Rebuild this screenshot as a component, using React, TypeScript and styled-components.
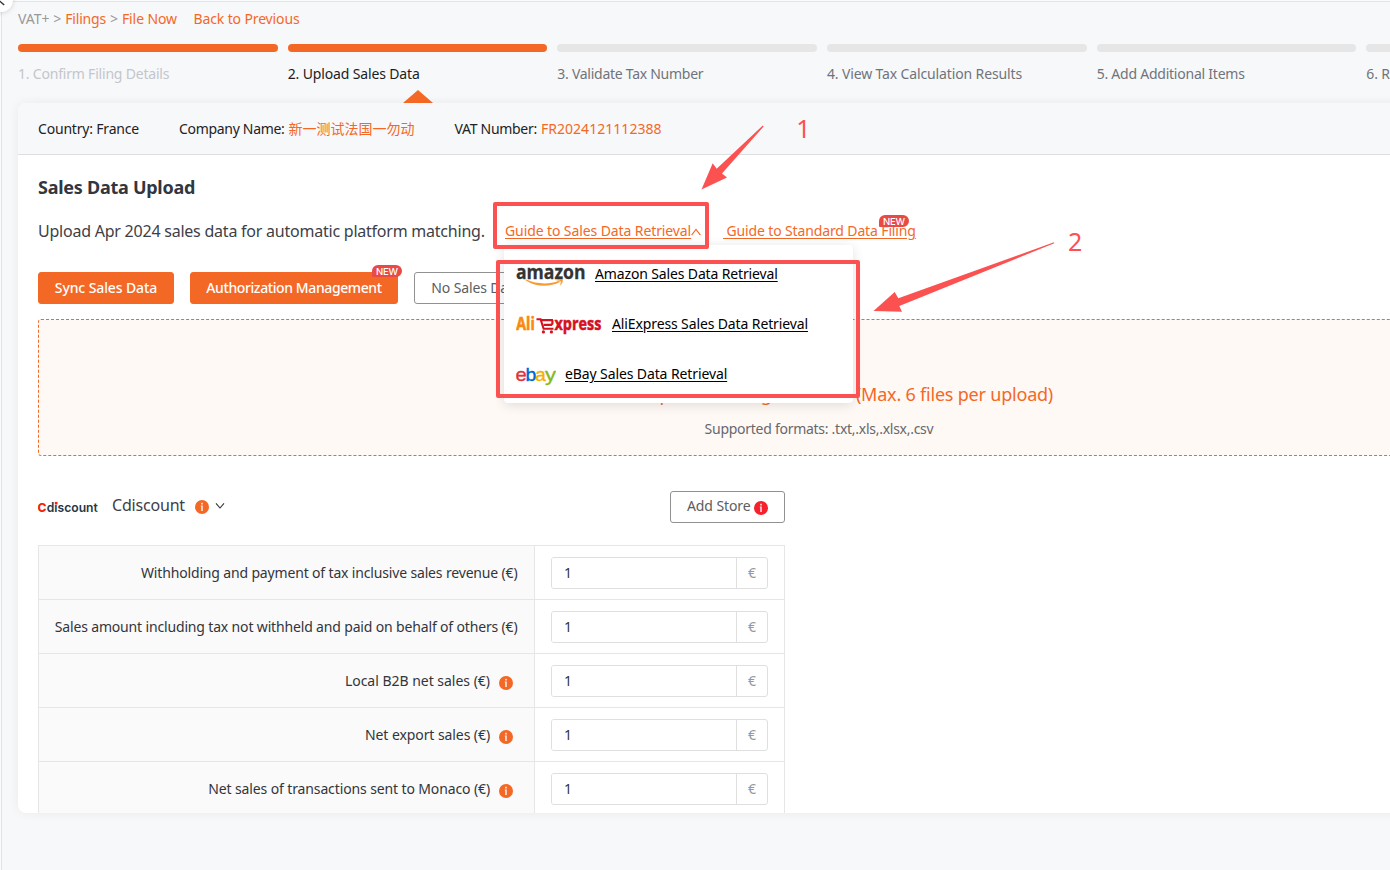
import React from 'react';
import styled, { createGlobalStyle, css } from 'styled-components';

const ORANGE = '#f46826';
const MARK = '#fb5251';

const GlobalStyle = createGlobalStyle`
  * { box-sizing: border-box; }
  html, body { margin: 0; padding: 0; }
  body {
    background: #fafbfc;
    font-family: 'Noto Sans', 'Noto Sans CJK SC', sans-serif;
    font-size: 14px;
    color: #222;
    overflow: hidden;
  }
`;

type Tracked = { $track?: number };
const tracking = css<Tracked>`
  letter-spacing: ${(p) => p.$track ?? 0}px;
  white-space: nowrap;
`;

const Viewport = styled.div`
  position: relative;
  width: 1390px;
  height: 870px;
  padding: 1px 0 0 1px;
  overflow: hidden;
`;

const Page = styled.main`
  height: 869px;
  padding-left: 16px;
  background: #f7f8fa;
  border-top: 1px solid #e2e4e8;
  border-left: 1px solid #e2e4e8;
  overflow: hidden;
`;

const CollapseKnob = styled.div`
  position: absolute;
  left: -11px;
  top: -12px;
  width: 24px;
  height: 24px;
  border-radius: 50%;
  background: #fff;
  box-shadow: 0 1px 5px rgba(0, 0, 0, 0.14);
  svg { display: block; }
`;

const Breadcrumb = styled.nav`
  display: flex;
  align-items: center;
  height: 34px;
  padding-bottom: 2px;
  color: #999;
`;

const Crumb = styled.span<Tracked & { $link?: boolean; $gap?: number }>`
  ${tracking}
  color: ${(p) => (p.$link ? ORANGE : '#999')};
  margin-right: ${(p) => p.$gap ?? 4}px;
`;

const Steps = styled.ol`
  display: grid;
  grid-template-columns: repeat(6, 1fr);
  column-gap: 10px;
  width: 1608px;
  height: 59px;
  margin: 8px 0 0;
  padding: 0;
  list-style: none;
`;

const Step = styled.li`
  display: flex;
  flex-direction: column;
`;

const StepBar = styled.div<{ $on: boolean }>`
  height: 8px;
  border-radius: 4px;
  background: ${(p) => (p.$on ? ORANGE : '#e6e6e6')};
`;

const stepColors = { done: '#c3c6cb', current: '#1c1c1e', todo: '#70747a' };
type StepState = keyof typeof stepColors;

const StepLabel = styled.div<Tracked & { $state: StepState }>`
  ${tracking}
  margin-top: 11px;
  line-height: 22px;
  color: ${(p) => stepColors[p.$state]};
`;

const StepPointer = styled.div`
  align-self: center;
  margin: 5px 0 0 1px;
  border: 15px solid transparent;
  border-top-width: 0;
  border-bottom: 13px solid ${ORANGE};
`;

const Card = styled.section`
  width: 1602px;
  height: 710px;
  border-radius: 8px;
  background: #fff;
  box-shadow: 0 0 12px rgba(0, 0, 0, 0.06);
  overflow: hidden;
`;

const CardHeader = styled.header`
  display: flex;
  align-items: center;
  gap: 40px;
  height: 52px;
  padding: 0 20px;
  background: #f7f8fa;
  border-bottom: 1px solid #dcdee1;
`;

const Fact = styled.div`
  display: flex;
  gap: 4px;
  height: 20px;
  line-height: 20px;
`;

const FactText = styled.span<Tracked & { $value?: boolean }>`
  ${tracking}
  color: ${(p) => (p.$value ? ORANGE : '#222')};
`;

const CardBody = styled.div`
  padding: 20px 20px 0;
`;

const Title = styled.h2`
  margin: 0;
  font-size: 18px;
  line-height: 24px;
  font-weight: 700;
  letter-spacing: -0.26px;
  color: #32363f;
`;

const IntroRow = styled.div`
  display: flex;
  align-items: center;
  height: 24px;
  margin-top: 20px;
`;

const Intro = styled.p`
  width: 467px;
  margin: 0;
  font-size: 16px;
  line-height: 24px;
  letter-spacing: -0.23px;
  white-space: nowrap;
  color: #3d4047;
`;

const GuideTrigger = styled.div`
  position: relative;
  display: flex;
  align-items: center;
  width: 196px;
  height: 24px;
  margin-right: 22px;
  color: ${ORANGE};
  svg { flex: none; margin-top: 2px; }
`;

const GuideLink = styled.a<Tracked>`
  ${tracking}
  position: relative;
  color: ${ORANGE};
  text-decoration: underline;
  text-underline-offset: 2px;
  line-height: 24px;
`;

const NewBadge = styled.span<{ $top: number; $right: number }>`
  position: absolute;
  top: ${(p) => p.$top}px;
  right: ${(p) => p.$right}px;
  width: 30px;
  height: 12px;
  border-radius: 6px 6px 6px 1px;
  background: #e84a46;
  color: #fff;
  font: 500 9.5px/13px Inter, sans-serif;
  letter-spacing: -0.2px;
  text-align: center;
`;

const Popup = styled.ul`
  position: absolute;
  z-index: 5;
  left: -1px;
  top: 26px;
  width: 349px;
  height: 158px;
  margin: 0;
  padding: 4px 12px;
  list-style: none;
  background: #fff;
  border-radius: 4px;
  box-shadow: 0 2px 12px rgba(0, 0, 0, 0.12);
`;

const PopupItem = styled.li<{ $gap: number }>`
  display: flex;
  align-items: center;
  gap: ${(p) => p.$gap}px;
  height: 50px;
  svg { margin: 0; flex: none; }
`;

const PopupLink = styled.a<Tracked>`
  ${tracking}
  padding-bottom: 2px;
  color: #000;
  text-decoration: underline;
  text-underline-offset: 2px;
`;

const Actions = styled.div`
  display: flex;
  gap: 16px;
  margin-top: 29px;
`;

const Button = styled.button<Tracked & { $primary?: boolean; $width: number }>`
  ${tracking}
  position: relative;
  display: flex;
  align-items: center;
  justify-content: center;
  gap: 4px;
  width: ${(p) => p.$width}px;
  height: 32px;
  padding: 0 0 1px;
  border-radius: 3px;
  border: 1px solid ${(p) => (p.$primary ? ORANGE : '#919191')};
  background: ${(p) => (p.$primary ? ORANGE : '#fff')};
  color: ${(p) => (p.$primary ? '#fff' : '#5b5d61')};
  font-family: inherit;
  font-size: 14px;
  font-weight: ${(p) => (p.$primary ? 500 : 400)};
`;

const StoreButton = styled(Button)`
  padding-bottom: 3px;
  gap: 3.5px;
  svg { margin-top: 5px; }
`;

const DropZone = styled.div`
  display: flex;
  flex-direction: column;
  align-items: center;
  gap: 10px;
  height: 137px;
  margin-top: 15px;
  padding-top: 60px;
  background: #fff9f6;
  border: 1px dashed ${ORANGE};
  border-radius: 3px;
`;

const DropTitle = styled.div`
  font-size: 18px;
  line-height: 28px;
  letter-spacing: -0.21px;
  color: ${ORANGE};
`;

const DropHint = styled.div`
  line-height: 22px;
  letter-spacing: -0.27px;
  color: #66686c;
`;

const StoreSection = styled.div`
  width: 747px;
  margin-top: 35px;
`;

const StoreHead = styled.div`
  display: flex;
  align-items: center;
  height: 32px;
`;

const StoreName = styled.span`
  margin: 0 10px 4px 14px;
  font-size: 16px;
  letter-spacing: -0.19px;
  color: #3d4047;
`;

const Spacer = styled.span`
  flex: 1;
`;

const HeadChevron = styled.span`
  display: flex;
  margin: 0 0 2px 6px;
  color: #333;
`;

const Grid = styled.div`
  margin-top: 22px;
  border: 1px solid #e6e6e6;
  border-bottom: 0;
`;

const GridRow = styled.div`
  display: grid;
  grid-template-columns: 496px 1fr;
  height: 54px;
  border-bottom: 1px solid #e6e6e6;
`;

const LabelCell = styled.div`
  display: flex;
  align-items: center;
  justify-content: flex-end;
  gap: 9px;
  padding-right: 16.5px;
  background: #fafafa;
  border-right: 1px solid #e6e6e6;
  svg { margin: 5px 4.5px 0 0; }
`;

const LabelText = styled.span<Tracked>`
  ${tracking}
  color: #33353a;
`;

const InputCell = styled.div`
  display: flex;
  align-items: center;
  padding: 0 16px;
`;

const AmountBox = styled.div`
  display: flex;
  width: 217px;
  height: 32px;
  border: 1px solid #dfdfdf;
  border-radius: 3px;
  overflow: hidden;
`;

const AmountInput = styled.input`
  flex: 1;
  min-width: 0;
  padding: 0 12px;
  border: 0;
  outline: 0;
  font: inherit;
  color: #33353a;
`;

const Currency = styled.span`
  width: 31px;
  border-left: 1px solid #dfdfdf;
  line-height: 30px;
  text-align: center;
  color: #96989c;
`;

const MarkLayer = styled.svg`
  position: absolute;
  z-index: 20;
  inset: 0;
  pointer-events: none;
`;

const Chevron = ({ up = false }: { up?: boolean }) => (
  <svg width="10" height="8" viewBox="0 0 10 8" fill="none" stroke="currentColor" strokeWidth="1.1">
    <path d={up ? 'M0.6 7.2L5 1.4L9.4 7.2' : 'M1 1.4L5 6L9 1.4'} />
  </svg>
);

const InfoIcon = ({ color = ORANGE }: { color?: string }) => (
  <svg width="14" height="14" viewBox="0 0 14 14">
    <circle cx="7" cy="7" r="7" fill={color} />
    <path d="M5.8 5.6H7.8V11H6.2V6.4H5.8Z" fill="#fff" opacity="0.85" />
    <rect x="6.2" y="2.8" width="1.6" height="1.7" fill="#fff" opacity="0.85" />
  </svg>
);

const AmazonLogo = () => (
  <svg width="70" height="26" viewBox="0 0 70 26">
    <text x="0" y="17.8" fontFamily="'Open Sans', sans-serif" fontWeight="700" fontSize="19.5" fill="#333" stroke="#333" strokeWidth="0.3" textLength="69.5" lengthAdjust="spacingAndGlyphs">amazon</text>
    <path d="M9.5 19.2C20 26.2 33 26.4 44 21L43 19.8C33 23.6 21 23.4 10.2 18.6Z" fill="#f79c34" />
    <path d="M39.5 19.2C42 18 45 17.8 46.8 18.6C47.2 20.6 46 23 44 24.8C44.3 23 45 21.4 44.6 20.2C43.6 19.4 41.4 19.5 39.5 19.2Z" fill="#f79c34" />
  </svg>
);

const AliExpressLogo = () => (
  <svg width="86" height="22" viewBox="0 0 86 22">
    <g fontFamily="'Open Sans', sans-serif" fontWeight="700" fontSize="17">
      <text x="0.3" y="17.2" fill="#f98a0c" stroke="#f98a0c" strokeWidth="0.6" textLength="18.5" lengthAdjust="spacingAndGlyphs">Ali</text>
      <text x="38.5" y="17.2" fill="#d5101f" stroke="#d5101f" strokeWidth="0.5" textLength="46.8" lengthAdjust="spacingAndGlyphs">xpress</text>
    </g>
    <path d="M20.5 6.2H24.6L27.6 15.8H37.5" fill="none" stroke="#d5101f" strokeWidth="2.1" />
    <path d="M25 7.2H37M36.4 7V10.6L35.2 11.8H27.5" fill="none" stroke="#d5101f" strokeWidth="2.2" />
    <circle cx="27.4" cy="18.9" r="1.6" fill="#d5101f" />
    <circle cx="35.4" cy="18.9" r="1.6" fill="#d5101f" />
  </svg>
);

const EbayLogo = () => (
  <svg width="40" height="24" viewBox="0 0 40 24">
    <g fontFamily="'Liberation Sans', sans-serif" fontSize="19">
      <text x="-0.6" y="18.8" fill="#e53238" stroke="#e53238" strokeWidth="0.35" textLength="11.2" lengthAdjust="spacingAndGlyphs">e</text>
      <text x="9.4" y="18.8" fill="#0064d2" stroke="#0064d2" strokeWidth="0.35" fontSize="18" textLength="10.8" lengthAdjust="spacingAndGlyphs">b</text>
      <text x="19.3" y="18.8" fill="#f5af02" stroke="#f5af02" strokeWidth="0.35">a</text>
      <text x="28.9" y="18.8" fill="#86b817" stroke="#86b817" strokeWidth="0.35" textLength="11" lengthAdjust="spacingAndGlyphs">y</text>
    </g>
  </svg>
);

const CdiscountLogo = () => (
  <svg width="60" height="18" viewBox="0 0 60 18">
    <g fontFamily="Inter, sans-serif">
      <text x="-0.4" y="13.9" fontWeight="800" fontSize="12" fill="#f5230c" textLength="9" lengthAdjust="spacingAndGlyphs">C</text>
      <text x="8.8" y="13.9" fontWeight="600" fontSize="12.5" fill="#263645" textLength="51" lengthAdjust="spacingAndGlyphs">discount</text>
    </g>
    <rect x="16.9" y="3.9" width="2.6" height="2.6" fill="#f5230c" />
  </svg>
);

const steps: { label: string; track: number; state: StepState }[] = [
  { label: '1. Confirm Filing Details', track: -0.2, state: 'done' },
  { label: '2. Upload Sales Data', track: -0.14, state: 'current' },
  { label: '3. Validate Tax Number', track: -0.27, state: 'todo' },
  { label: '4. View Tax Calculation Results', track: -0.135, state: 'todo' },
  { label: '5. Add Additional Items', track: -0.235, state: 'todo' },
  { label: '6. Review and Submit', track: -0.2, state: 'todo' },
];

const rows = [
  { label: 'Withholding and payment of tax inclusive sales revenue (€)', track: -0.16, info: false },
  { label: 'Sales amount including tax not withheld and paid on behalf of others (€)', track: -0.158, info: false },
  { label: 'Local B2B net sales (€)', track: -0.02, info: true },
  { label: 'Net export sales (€)', track: -0.08, info: true },
  { label: 'Net sales of transactions sent to Monaco (€)', track: -0.12, info: true },
];

const guides = [
  { label: 'Amazon Sales Data Retrieval', track: -0.14, gap: 9, Logo: AmazonLogo },
  { label: 'AliExpress Sales Data Retrieval', track: -0.12, gap: 10, Logo: AliExpressLogo },
  { label: 'eBay Sales Data Retrieval', track: -0.11, gap: 9, Logo: EbayLogo },
];

export default function App() {
  return (
    <Viewport>
      <GlobalStyle />
      <Page>
        <Breadcrumb>
          <Crumb>VAT+ &gt;</Crumb>
          <Crumb $link $track={-0.2}>Filings</Crumb>
          <Crumb>&gt;</Crumb>
          <Crumb $link $track={-0.1} $gap={16.5}>File Now</Crumb>
          <Crumb $link $track={-0.13}>Back to Previous</Crumb>
        </Breadcrumb>

        <Steps>
          {steps.map((s) => (
            <Step key={s.label}>
              <StepBar $on={s.state !== 'todo'} />
              <StepLabel $track={s.track} $state={s.state}>{s.label}</StepLabel>
              {s.state === 'current' && <StepPointer />}
            </Step>
          ))}
        </Steps>

        <Card>
          <CardHeader>
            <Fact><FactText $track={-0.19}>Country: France</FactText></Fact>
            <Fact>
              <FactText $track={-0.31}>Company Name:</FactText>
              <FactText $value>新一测试法国一勿动</FactText>
            </Fact>
            <Fact>
              <FactText $track={-0.3}>VAT Number:</FactText>
              <FactText $value $track={0.04}>FR2024121112388</FactText>
            </Fact>
          </CardHeader>

          <CardBody>
            <Title>Sales Data Upload</Title>
            <IntroRow>
              <Intro>Upload Apr 2024 sales data for automatic platform matching.</Intro>
              <GuideTrigger>
                <GuideLink $track={-0.1}>Guide to Sales Data Retrieval</GuideLink>
                <Chevron up />
                <Popup>
                  {guides.map(({ label, track, gap, Logo }) => (
                    <PopupItem key={label} $gap={gap}>
                      <Logo />
                      <PopupLink $track={track}>{label}</PopupLink>
                    </PopupItem>
                  ))}
                </Popup>
              </GuideTrigger>
              <GuideLink $track={-0.135}>
                &nbsp;Guide to Standard Data Filing
                <NewBadge $top={-4} $right={7}>NEW</NewBadge>
              </GuideLink>
            </IntroRow>

            <Actions>
              <Button $primary $width={136} $track={-0.11}>Sync Sales Data</Button>
              <Button $primary $width={208} $track={-0.4}>
                Authorization Management
                <NewBadge $top={-8} $right={-5}>NEW</NewBadge>
              </Button>
              <Button $width={124} $track={-0.14}>No Sales Data</Button>
            </Actions>

            <DropZone>
              <DropTitle>Click to upload or drag files here (Max. 6 files per upload)</DropTitle>
              <DropHint>Supported formats: .txt,.xls,.xlsx,.csv</DropHint>
            </DropZone>

            <StoreSection>
              <StoreHead>
                <CdiscountLogo />
                <StoreName>Cdiscount</StoreName>
                <InfoIcon />
                <HeadChevron><Chevron /></HeadChevron>
                <Spacer />
                <StoreButton $width={115} $track={-0.1}>
                  Add Store
                  <InfoIcon color="#f5222d" />
                </StoreButton>
              </StoreHead>

              <Grid>
                {rows.map((r) => (
                  <GridRow key={r.label}>
                    <LabelCell>
                      <LabelText $track={r.track}>{r.label}</LabelText>
                      {r.info && <InfoIcon />}
                    </LabelCell>
                    <InputCell>
                      <AmountBox>
                        <AmountInput defaultValue="1" />
                        <Currency>€</Currency>
                      </AmountBox>
                    </InputCell>
                  </GridRow>
                ))}
              </Grid>
            </StoreSection>
          </CardBody>
        </Card>
      </Page>

      <CollapseKnob>
        <svg width="24" height="24" viewBox="0 0 24 24" fill="none" stroke="#333" strokeWidth="1.4">
          <path d="M10 12.5L15.2 17" />
        </svg>
      </CollapseKnob>

      <MarkLayer width="1390" height="870" viewBox="0 0 1390 870">
        <g fill="none" stroke={MARK} strokeWidth="4" strokeLinejoin="round">
          <rect x="495" y="204" width="212" height="43" />
          <rect x="498" y="262" width="360" height="134" />
        </g>
        <g fill={MARK}>
          <path d="M701.5 189.5L712.7 163.3L716.7 168.7L762.8 125.4L763.6 126.4L722 173.5L727 177.5Z" />
          <path d="M873.5 311L894.7 292L898.3 298.3L1054 242.2L1054.3 243.2L899.3 306L902 311.8Z" />
          <g fontFamily="'Noto Sans', sans-serif" fontSize="25">
            <text x="796.3" y="138">1</text>
            <text x="1068" y="251">2</text>
          </g>
        </g>
      </MarkLayer>
    </Viewport>
  );
}
